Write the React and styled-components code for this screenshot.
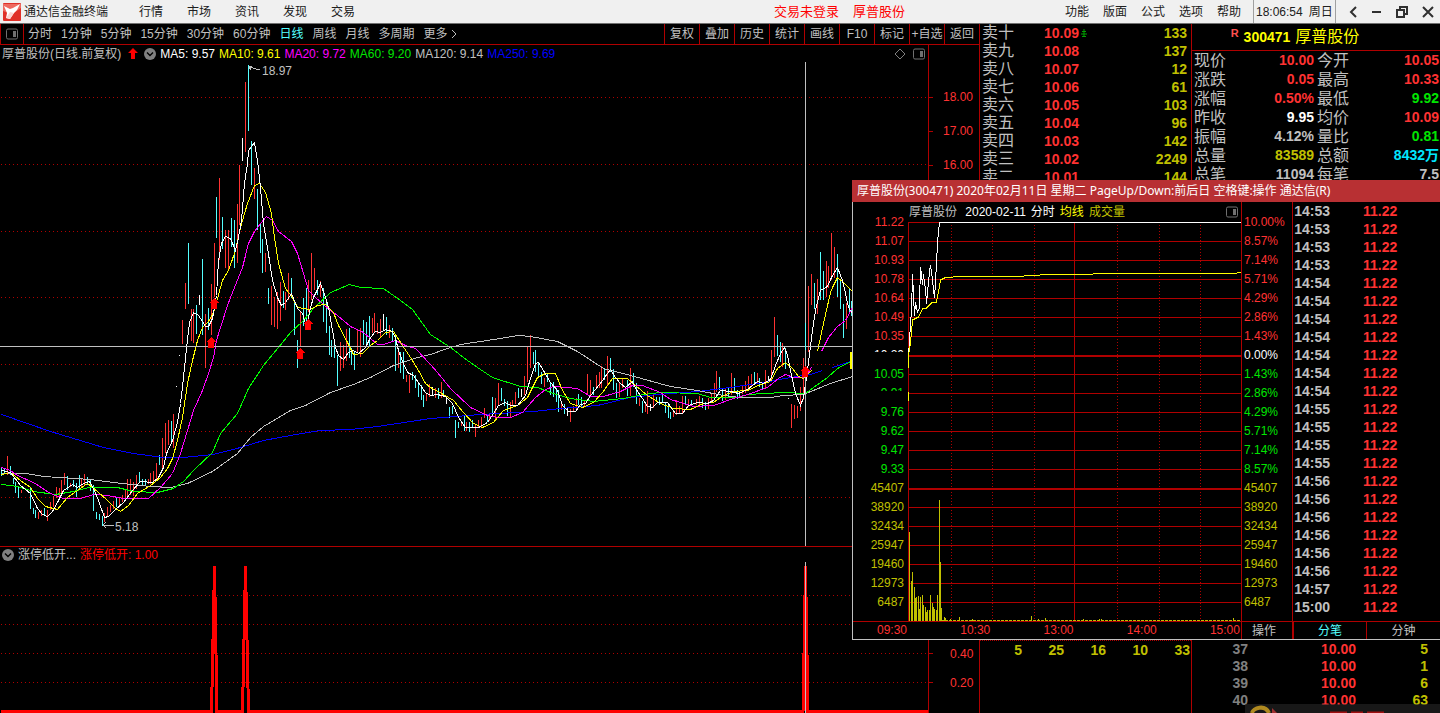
import React from 'react';
import styled, { createGlobalStyle } from 'styled-components';

const GREY = '#c0c0c0';
const RED = '#ff3232';
const YELLOW = '#c0c000';
const GREEN = '#00e600';
const CYAN = '#54ffff';
const LINE = '#b00000';

const GlobalStyle = createGlobalStyle`
  * {
    box-sizing: border-box;
  }

  body {
    margin: 0;
    background: #000;
    color: ${GREY};
    font-family: 'Liberation Sans', 'Noto Sans CJK SC', sans-serif;
    font-size: 12px;
    line-height: 16px;
  }

  button {
    margin: 0;
    padding: 0;
    border: 0;
    background: none;
    color: inherit;
    font: inherit;
    white-space: nowrap;
  }

  svg {
    display: block;
    flex: none;
  }

  table {
    border-collapse: collapse;
  }

  td, th {
    padding: 0;
    font-weight: normal;
  }
`;

const Page = styled.div`
  position: relative;
  display: flex;
  flex-direction: column;
  min-height: 100vh;
  overflow: hidden;
`;

/* top menu */

const MenuBar = styled.header`
  display: flex;
  align-items: stretch;
  height: 24px;
  padding-left: 3px;
  background: #f0f0f0;
  border-bottom: 1px solid #707070;
  color: #202020;
`;

const Brand = styled.div`
  display: flex;
  align-items: center;
  gap: 3px;
  margin-right: 31px;
`;

const Menu = styled.nav`
  display: flex;
  gap: ${props => props.$gap};
`;

const Alerts = styled.div`
  display: flex;
  align-items: center;
  gap: 14px;
  margin-left: auto;
  margin-right: 160px;
  color: #f00;
  font-size: 13px;
`;

const Clock = styled.time`
  display: flex;
  align-items: center;
  gap: 6px;
  width: 83px;
  margin-left: 12px;
  padding-left: 2px;
  border-left: 1px solid #a0a0a0;
  border-right: 1px solid #a0a0a0;
`;

const WindowButtons = styled.div`
  display: flex;
  align-items: center;
  justify-content: space-between;
  width: 104px;
  padding: 0 6px 0 12px;
`;

/* workspace */

const Workspace = styled.main`
  display: flex;
  flex: 1;
`;

const ChartColumn = styled.section`
  display: flex;
  flex: 1;
  flex-direction: column;
  min-width: 0;
`;

const Toolbar = styled.div`
  display: flex;
  height: 21px;
  border-bottom: 1px solid ${LINE};
`;

const PanelToggle = styled.button`
  display: flex;
  align-items: center;
  justify-content: center;
  width: 24px;
  border-left: 1px solid ${LINE};
  border-right: 1px solid ${LINE};
`;

const Periods = styled.div`
  display: flex;
  gap: 9px;
  padding-left: 4px;
`;

const Period = styled.button`
  display: flex;
  align-items: center;
  gap: 3px;
  color: ${props => (props.$active ? CYAN : GREY)};
`;

const Tools = styled.div`
  display: flex;
  margin-left: auto;
`;

const Tool = styled.button`
  width: 35px;
  border-left: 1px solid ${LINE};
`;

const Charts = styled.div`
  display: flex;
  flex: 1;
`;

const Panes = styled.div`
  display: flex;
  flex: 1;
  flex-direction: column;
  min-width: 0;
`;

const PaneHead = styled.div`
  display: flex;
  align-items: center;
  gap: 4px;
  height: ${props => props.$height};
  padding: 0 3px 0 2px;
  white-space: nowrap;
`;

const HeadMarks = styled.div`
  display: flex;
  align-items: center;
  gap: 6px;
  margin-left: 3px;
`;

const HeadIcons = styled.div`
  display: flex;
  align-items: center;
  gap: 7px;
  margin-left: auto;
`;

const Tint = styled.span`
  color: ${props => props.$color};
`;

const PriceChart = styled.svg`
  flex: 1 0 484px;
  width: 100%;
`;

const SignalPane = styled.div`
  height: 167px;
  border-top: 1px solid ${LINE};
`;

const SignalChart = styled.svg`
  width: 100%;
  height: 151px;
`;

const Scale = styled.div`
  display: flex;
  flex-direction: column;
  justify-content: space-between;
  width: 51px;
  border-left: 1px solid ${LINE};
  color: ${RED};
`;

const ScaleGroup = styled.div`
  padding: ${props => props.$padding};
`;

const ScaleMark = styled.div`
  display: flex;
  align-items: center;
  gap: ${props => props.$gap};
  height: ${props => props.$height};

  &::before {
    content: '';
    width: 4px;
    height: 1px;
    background: ${LINE};
  }
`;

/* order book */

const BookColumn = styled.section`
  display: flex;
  flex-direction: column;
  justify-content: space-between;
  width: 212px;
  border-left: 1px solid ${LINE};
`;

const Book = styled.table`
  width: 100%;

  th {
    width: 64px;
    padding-left: 2px;
    font-size: 16px;
    text-align: left;
  }

  tr {
    height: 18px;
    line-height: 18px;
  }
`;

const Num = styled.td`
  color: ${props => props.$color};
  font-size: 14px;
  font-weight: bold;
  text-align: ${props => props.$align || 'right'};
  padding-right: ${props => props.$pad || 0};
`;

const Arrow = styled.svg`
  display: inline-block;
  margin-left: 2px;
  vertical-align: 1px;
`;

const Queue = styled.div`
  display: grid;
  grid-template-columns: repeat(5, 42px);
  height: 73px;
  border-top: 1px dotted ${LINE};
  color: ${YELLOW};
  font-size: 14px;
  font-weight: bold;
  line-height: 18px;
  text-align: right;
`;

/* quote */

const QuoteColumn = styled.section`
  display: flex;
  flex-direction: column;
  justify-content: space-between;
  width: 249px;
  border-left: 1px solid ${LINE};
`;

const QuoteTitle = styled.h1`
  display: flex;
  align-items: center;
  justify-content: center;
  gap: 5px;
  height: 27px;
  margin: 0;
  padding-right: 42px;
  border-bottom: 1px solid ${LINE};
  color: #ff0;
  font-size: 14px;
`;

const Mark = styled.sup`
  align-self: flex-start;
  padding-top: 2px;
  color: #ff5050;
  font-size: 11px;
  line-height: 14px;
`;

const StockName = styled.span`
  font-size: 16px;
  font-weight: normal;
`;

const Quote = styled.dl`
  display: grid;
  grid-template-columns: 32px 1fr 32px 87px;
  column-gap: 3px;
  margin: 0;
  padding: 0 1px 0 2px;
  line-height: 19px;

  dt {
    font-size: 16px;
    white-space: nowrap;
  }
`;

const QuoteValue = styled.dd`
  margin: 0;
  color: ${props => props.$color};
  font-size: 14px;
  font-weight: bold;
  text-align: right;
`;

const Trades = styled.table`
  width: 236px;
  table-layout: fixed;

  th {
    width: 56px;
  }

  td:nth-child(2) {
    width: 108px;
  }

  tr {
    height: 17px;
    line-height: 17px;
  }
`;

const TradesBox = styled.div`
  height: 72px;
`;

/* intraday window */

const Popup = styled.aside`
  position: absolute;
  top: 180px;
  right: 0;
  width: 588px;
  background: #000;
  border-bottom: 1px solid ${GREY};
`;

const PopupTitle = styled.h2`
  height: 22px;
  margin: 0;
  padding-left: 5px;
  background: #b83033;
  color: #fff;
  font-family: 'Noto Sans', 'Noto Sans CJK SC', sans-serif;
  font-size: 12px;
  font-weight: normal;
  line-height: 22px;
  white-space: nowrap;
`;

const PopupBody = styled.div`
  display: grid;
  grid-template-columns: 55px 1fr 51px 148px;
  grid-template-rows: 419px 18px;
  border-left: 1px solid ${GREY};
`;

const Axis = styled.div`
  padding: ${props => (props.$right ? '11px 0 0 2px' : '11px 4px 0 0')};
  border-left: ${props => (props.$right ? `1px solid ${LINE}` : '0')};
  text-align: ${props => (props.$right ? 'left' : 'right')};
`;

const AxisLabel = styled.div`
  height: 19px;
  color: ${props => props.$color};
  line-height: 19px;
`;

/* only the top few pixels of a label are painted */
const Sliver = styled.div`
  height: ${props => props.$height};
  margin-bottom: ${props => props.$rest};
  overflow: hidden;
`;

const Legend = styled.div`
  display: flex;
  align-items: center;
  gap: 5px;
  height: 20px;
  padding: 0 3px 0 1px;
  white-space: nowrap;
`;

const IntradayChart = styled.svg`
  width: 100%;
  height: 399px;
`;

const TickPane = styled.div`
  border-left: 1px solid ${LINE};
`;

const Ticks = styled.table`
  tr {
    height: 18px;
    line-height: 18px;
  }
`;

const TimeAxis = styled.div`
  display: flex;
  grid-column: 1 / 3;
  justify-content: space-between;
  padding: 0 1px 0 24px;
  border-top: 1px solid ${LINE};
  color: ${RED};
`;

const Operate = styled.button`
  border-top: 1px solid ${LINE};
  border-left: 1px solid ${LINE};
  padding-right: 6px;
`;

const Tabs = styled.div`
  display: grid;
  grid-template-columns: 1fr 1fr;
  border-top: 1px solid ${LINE};
`;

const Tab = styled.button`
  border-left: ${props => (props.$active ? '2px' : '1px')} solid ${LINE};
  color: ${props => (props.$active ? CYAN : GREY)};
`;

const Toast = styled.div`
  position: absolute;
  right: 0;
  bottom: 0;
  width: 195px;
  height: 9px;
  overflow: hidden;
  background: rgba(40, 40, 40, 0.6);
`;

/* data: each bar is "x,high,low" */

const UP_BARS = `7,456,475 21,490,493 38,512,519 41,510,516 47,510,521 50,502,510 53,496,507
56,487,498 59,488,498 61,480,495 64,473,485 70,483,487 81,478,487 84,474,486 104,513,522
107,507,517 110,505,512 113,501,509 119,497,506 122,495,502 125,490,500 127,479,499
130,479,495 133,482,496 136,475,489 148,479,484 150,473,484 153,471,482 156,463,481
162,438,471 165,423,453 168,420,445 173,414,448 182,320,344 185,283,309 191,309,341
193,309,343 205,314,368 211,284,335 214,243,297 219,178,260 225,230,268 228,230,270
237,204,263 239,165,225 245,82,152 254,168,199 265,253,272 271,286,325 274,297,327
277,292,329 280,282,321 285,292,310 288,273,300 300,312,347 308,280,312 311,253,300
314,268,290 320,281,297 340,342,371 343,345,368 346,329,361 357,330,352 360,328,357
372,318,333 374,313,333 377,323,334 380,319,337 389,325,338 398,350,368 406,375,382
409,375,393 426,394,401 429,384,397 435,388,398 441,382,398 461,422,426 466,422,431
475,424,437 478,420,428 481,417,428 484,408,418 489,413,421 495,398,420 498,383,405
510,402,417 512,400,406 515,392,404 524,376,395 527,347,382 530,335,368 544,378,387
561,402,410 570,409,422 573,406,412 576,398,410 584,400,406 587,374,395 590,380,396
596,375,387 599,372,388 601,366,388 607,356,385 619,383,397 622,378,388 630,368,396
639,398,406 645,403,412 647,391,414 653,395,408 673,410,417 676,400,415 679,406,413
682,396,414 688,399,407 696,399,405 699,396,405 708,398,409 711,393,403 714,383,398
716,371,392 725,388,400 731,373,395 742,386,394 745,381,393 748,376,390 751,374,386
757,373,383 765,370,388 771,350,380 774,317,357 782,343,367 791,404,428 794,405,419
797,406,418 800,387,411 803,358,400 808,286,352 811,274,305 817,279,314 826,261,297
828,266,288 831,233,280 834,247,278 846,303,329`;

const DOWN_BARS = `1,468,476 4,469,474 10,466,475 13,478,484 15,482,493 18,486,498 30,488,509
33,508,514 35,510,518 44,508,516 67,476,490 73,480,487 76,483,497 79,475,488 87,477,485
90,480,491 93,485,511 96,512,519 99,514,520 102,516,526 116,498,507 139,472,482 142,479,485
145,479,486 159,455,465 171,421,442 188,243,304 196,305,334 202,259,335 208,308,330
216,197,238 222,217,249 231,218,247 234,220,268 248,65,131 251,141,185 257,189,230
260,223,253 262,239,273 268,288,304 283,291,308 291,278,298 294,300,335 297,340,368
303,298,326 306,288,327 317,280,295 323,288,322 326,300,333 329,326,355 331,340,357
334,345,358 337,355,386 349,328,358 351,348,365 354,352,370 363,320,345 366,322,345
369,316,347 386,317,335 392,328,342 395,335,371 400,352,373 403,352,379 412,372,380
415,375,388 418,383,397 421,385,400 423,395,407 438,388,399 443,390,397 449,407,418
452,406,414 455,420,438 458,422,428 464,415,431 469,422,432 472,420,428 487,414,422
492,397,413 501,388,401 504,399,406 507,401,416 518,388,398 533,352,364 535,350,372
538,362,376 541,372,384 547,374,382 550,382,395 553,382,397 556,388,402 558,390,412
564,404,414 578,394,405 581,397,408 593,387,395 604,368,380 610,358,372 613,369,390
616,383,398 627,380,396 633,373,387 636,383,404 642,401,413 656,397,402 659,397,405
662,393,402 665,402,413 668,405,418 670,412,419 685,396,405 691,400,405 702,398,408
705,402,410 719,377,390 722,388,401 728,388,397 734,378,392 737,390,399 739,391,397
754,372,384 759,378,387 762,383,390 777,335,356 780,342,362 785,348,369 814,283,309
820,252,300 823,271,300 837,254,297 840,281,309 843,304,338 849,288,312 851,301,316`;

const FLAT_BARS = `199,295,305 242,138,161 383,314,330 432,387,396 446,396,404 521,389,397
567,408,416 650,404,411 768,376,382 179,355,356 176,386,387 788,398,399`;

const AVERAGES = [
  {
    color: '#0000ff',
    lines: [
      '1,414 50,431 103,447 133,453 163,457 183,457 213,454 240,447 263,440 290,435 320,430 350,429 377,426 430,418 480,414 533,411 560,408 597,405 630,397 657,394 697,391 730,387 763,382 790,377 810,374 822,370',
      '832,367 850,361 852,360',
    ],
  },
  {
    color: GREY,
    lines: [
      '1,473 25,473 43,476 90,479 113,482 150,486 170,487 187,483 212,471 237,453 250,437 263,426 290,410 305,405 330,392 353,384 370,377 393,365 417,357 430,354 447,348 460,344 500,338 518,335 530,336 557,341 577,351 603,368 630,375 670,386 697,390 723,395 740,397 770,397 783,395 803,394 830,383 852,376',
    ],
  },
  {
    color: '#00ff00',
    lines: [
      '1,484 17,486 33,491 55,494 73,491 88,487 117,487 133,491 157,492 173,488 183,481 193,470 212,452 220,433 237,413 248,388 263,365 278,347 290,332 303,320 313,308 330,292 349,284 360,287 383,288 400,300 412,309 422,323 430,334 450,347 467,360 480,369 492,377 520,386 537,387 553,393 570,398 593,401 623,398 643,394 660,392 697,393 710,397 737,397 747,394 783,392 805,393 813,387 827,377 837,368 852,360',
    ],
  },
  {
    color: '#ff00ff',
    lines: [
      '1,467 10,470 17,475 33,482 50,493 63,498 80,498 93,494 107,495 123,498 148,498 160,487 172,473 180,453 187,430 193,410 202,390 208,373 213,357 216,340 220,327 227,305 232,292 242,267 248,243 254,231 260,223 266,216 272,220 278,231 291,241 297,253 303,273 308,290 315,297 330,310 337,315 350,326 363,332 377,344 383,344 395,340 405,345 415,348 430,364 437,372 450,388 470,407 487,415 497,417 510,417 522,412 535,397 545,389 553,386 577,388 590,396 603,396 620,391 632,385 642,385 660,392 670,399 693,406 713,405 733,398 747,394 767,387 778,378 785,374 793,377 805,377 811,367',
      '821,351 828,337 837,326 845,320 852,307',
    ],
  },
  {
    color: '#ffff00',
    lines: [
      '1,474 10,472 20,480 30,487 37,498 45,506 57,509 67,497 77,490 87,483 97,491 107,500 115,508 120,511 128,505 137,493 150,485 160,477 167,468 172,458 177,440 182,417 187,383 192,360 197,340 202,327 208,321 213,312 217,298 222,280 228,270 235,250 240,227 247,203 254,185 259,183 265,192 271,213 274,237 278,263 285,288 292,297 297,307 310,309 317,305 325,304 333,312 338,325 347,342 353,354 362,353 370,345 377,340 385,332 393,331 402,345 410,357 418,370 425,383 430,387 443,394 453,400 463,412 473,423 482,427 493,422 503,410 517,405 527,397 537,377 545,373 555,373 562,390 570,403 582,407 593,402 602,392 612,378 627,378 635,385 647,395 660,403 673,408 690,409 703,403 713,402 723,395 733,391 747,390 758,385 770,381 777,368 785,362 792,368 798,376 803,378 811,370',
      '817,351 823,323 830,292 832,287 837,277 843,282 852,291',
    ],
  },
  {
    color: '#ffffff',
    lines: [
      '1,470 10,472 20,485 30,493 37,508 42,514 47,516 52,511 58,500 63,490 72,484 77,487 83,483 89,481 93,488 98,500 104,517 108,516 115,509 123,502 132,490 140,481 152,482 158,477 163,467 166,453 172,440 177,422 180,403 182,387 184,367 186,348 189,322 193,312 198,315 202,321 205,326 208,326 212,318 216,295 218,260 221,243 225,236 230,238 235,250 237,242 241,220 244,183 247,163 248,150 254,142 257,160 260,187 263,223 267,247 272,280 277,297 281,305 285,302 291,293 297,308 302,313 306,327 310,307 313,297 320,283 325,297 328,307 332,330 335,347 338,355 343,359 348,352 353,350 358,353 365,347 370,337 375,331 380,332 385,329 392,331 395,338 398,350 403,363 407,372 413,375 420,385 425,392 430,395 437,394 445,396 452,403 458,417 465,427 478,427 487,422 493,413 498,405 505,402 510,405 517,405 525,395 530,378 535,363 538,362 543,370 550,382 557,390 562,405 568,411 575,411 580,404 585,403 590,395 595,389 602,380 610,369 615,377 620,383 625,387 632,381 635,388 642,398 647,406 652,407 657,402 667,402 675,413 682,413 688,405 697,402 707,403 713,400 720,390 730,391 738,393 747,389 757,381 763,383 770,379 775,365 780,353 784,347 787,355 790,370 795,393 800,405 803,397 807,370 809,353 812,330 815,310 818,297 820,290 827,286 831,277 837,267 842,280 845,293 848,307 852,313',
    ],
  },
];

const SIGNALS = [[214, 304], [211, 343], [308, 325], [300, 354], [805, 372]];

const VOLUMES = `909,532 911,581 912,572 914,587 915,598 916,597 918,596 919,609 920,597 922,595
923,605 925,607 926,612 927,610 929,610 930,595 932,603 933,607 934,609 936,610 937,595
939,500 940,562 941,608 944,617 945,618 950,619 959,617 972,619 1031,616 1038,619 1045,618
1083,619 1099,619 1101,619 1233,618`;

const PERIODS = ['分时', '1分钟', '5分钟', '15分钟', '30分钟', '60分钟', '日线', '周线', '月线', '多周期'];
const TOOLS = ['复权', '叠加', '历史', '统计', '画线', 'F10', '标记', '+自选', '返回'];

const MA_LABELS = [
  ['MA5: 9.57', '#fff'],
  ['MA10: 9.61', '#ff0'],
  ['MA20: 9.72', '#f0f'],
  ['MA60: 9.20', GREEN],
  ['MA120: 9.14', GREY],
  ['MA250: 9.69', '#00f'],
];

const ASKS = [
  ['卖十', '10.09', 133],
  ['卖九', '10.08', 137],
  ['卖八', '10.07', 12],
  ['卖七', '10.06', 61],
  ['卖六', '10.05', 103],
  ['卖五', '10.04', 96],
  ['卖四', '10.03', 142],
  ['卖三', '10.02', 2249],
  ['卖二', '10.01', 144],
];

const QUOTE = [
  ['现价', '10.00', RED], ['今开', '10.05', RED],
  ['涨跌', '0.05', RED], ['最高', '10.33', RED],
  ['涨幅', '0.50%', RED], ['最低', '9.92', GREEN],
  ['昨收', '9.95', '#fff'], ['均价', '10.09', RED],
  ['振幅', '4.12%', GREY], ['量比', '0.81', GREEN],
  ['总量', '83589', YELLOW], ['总额', '8432万', '#00e6ff'],
  ['总笔', '11094', GREY], ['每笔', '7.5', GREY],
];

const TRADES = [[37, '10.00', 5], [38, '10.00', 1], [39, '10.00', 6], [40, '10.00', 63]];

const PRICES = ['11.22', '11.07', '10.93', '10.78', '10.64', '10.49', '10.35', '10.20', '10.05', '9.91', '9.76', '9.62', '9.47', '9.33'];
const PERCENTS = ['10.00%', '8.57%', '7.14%', '5.71%', '4.29%', '2.86%', '1.43%', '0.00%', '1.43%', '2.86%', '4.29%', '5.71%', '7.14%', '8.57%'];
const LOTS = ['45407', '38920', '32434', '25947', '19460', '12973', '6487'];

const TICK_TIMES = [
  '14:53', '14:53', '14:53', '14:53',
  '14:54', '14:54', '14:54', '14:54', '14:54', '14:54', '14:54',
  '14:55', '14:55', '14:55', '14:55',
  '14:56', '14:56', '14:56', '14:56', '14:56', '14:56',
  '14:57', '15:00',
];

const axisColor = (i) => {
  if (i === 7) return '#fff';
  return i < 7 ? RED : GREEN;
};

const barPath = bars => bars
  .split(/\s+/)
  .map((bar) => {
    const [x, high, low] = bar.split(',');
    return `M${x}.5 ${high}V${low}`;
  })
  .join('');

const volumePath = VOLUMES
  .split(/\s+/)
  .map((bar) => {
    const [x, top] = bar.split(',');
    return `M${x}.5 ${top}V621`;
  })
  .join('');

function Logo() {
  return (
    <svg width="18" height="18" viewBox="0 0 18 18">
      <rect width="18" height="18" rx="1" fill="#e03028" />
      <path d="M0 1h18v4L9 11 0 8z" fill="#ee6a60" />
      <path d="M1 3l6 3 3-1 7-4-3 6-3 3-4 6-4-1 1-5z" fill="#fff" />
      <path d="M7 9l4 1-4 6-4-1z" fill="#fbd5d2" />
    </svg>
  );
}

function PanelIcon() {
  return (
    <svg width="12" height="12" viewBox="0 0 12 12" fill="none">
      <rect x="0.5" y="1" width="11" height="10" rx="1.5" stroke="#707070" />
      <rect x="7" y="3" width="3" height="6" fill="#707070" />
    </svg>
  );
}

function DropIcon() {
  return (
    <svg width="12" height="12" viewBox="0 0 12 12" fill="none">
      <circle cx="6" cy="6" r="6" fill="#808080" />
      <path d="M3 4.5l3 3 3-3" stroke="#000" strokeWidth="1.4" />
    </svg>
  );
}

function UpArrow() {
  return (
    <svg width="10" height="11" viewBox="0 0 10 11">
      <path d="M5 0l5 5H7v6H3V5H0z" fill="#f00" />
    </svg>
  );
}

function TopMenu() {
  return (
    <MenuBar>
      <Brand>
        <Logo />
        通达信金融终端
      </Brand>
      <Menu $gap="24px">
        {['行情', '市场', '资讯', '发现', '交易'].map(item => <button key={item}>{item}</button>)}
      </Menu>
      <Alerts>
        <button>交易未登录</button>
        <button>厚普股份</button>
      </Alerts>
      <Menu $gap="14px">
        {['功能', '版面', '公式', '选项', '帮助'].map(item => <button key={item}>{item}</button>)}
      </Menu>
      <Clock>
        <span>18:06:54</span>
        <span>周日</span>
      </Clock>
      <WindowButtons>
        <button aria-label="后退">
          <svg width="10" height="12" viewBox="0 0 10 12" fill="none" stroke="#303030" strokeWidth="2">
            <path d="M8 1L3 6l5 5" />
          </svg>
        </button>
        <button aria-label="最小化">
          <svg width="10" height="12" viewBox="0 0 10 12">
            <rect y="5" width="9" height="2" fill="#303030" />
          </svg>
        </button>
        <button aria-label="还原">
          <svg width="12" height="12" viewBox="0 0 12 12" fill="none" stroke="#303030" strokeWidth="2">
            <path d="M4 4V1h7v7H8M1 4h7v7H1z" />
          </svg>
        </button>
        <button aria-label="关闭">
          <svg width="12" height="12" viewBox="0 0 12 12" fill="none" stroke="#303030" strokeWidth="2">
            <path d="M1 1l10 10M11 1L1 11" />
          </svg>
        </button>
      </WindowButtons>
    </MenuBar>
  );
}

function DailyChart() {
  return (
    <PriceChart viewBox="0 62 928 484" preserveAspectRatio="none" fill="none" shapeRendering="crispEdges">
      {[97, 164, 231, 297, 364, 431, 497].map(y => (
        <path key={y} d={`M1 ${y}.5H928`} stroke={LINE} strokeDasharray="1 3" />
      ))}
      <path d={barPath(UP_BARS)} stroke={RED} />
      <path d={barPath(DOWN_BARS)} stroke={CYAN} />
      <path d={barPath(FLAT_BARS)} stroke="#fff" />
      {AVERAGES.map(ma => ma.lines.map(points => (
        <polyline key={points} points={points} stroke={ma.color} transform="translate(0.5 0.5)" />
      )))}
      <path d="M0 346.5H852M805.5 62V546" stroke={GREY} />
      <path d="M805.5 323V350" stroke={CYAN} />
      <path d="M851 352V369" stroke="#ff0" strokeWidth="2" />
      {SIGNALS.map(([x, y]) => (
        <path key={x} d={`M${x} ${y - 6}l5 5h-2v6h-6v-6h-2z`} fill="#f00" />
      ))}
      <path d="M249 67L260 70M249 66h3M249 67l2 3M103 525.5H114M103 525l3-3M103 525l3 3" stroke={GREY} />
      <text x="262" y="75" fill={GREY}>18.97</text>
      <text x="115" y="531" fill={GREY}>5.18</text>
    </PriceChart>
  );
}

function Signals() {
  return (
    <SignalChart viewBox="0 562 928 151" preserveAspectRatio="none" fill="none" shapeRendering="crispEdges">
      {[595, 624, 653, 682].map(y => (
        <path key={y} d={`M1 ${y}.5H928`} stroke={LINE} strokeDasharray="1 3" />
      ))}
      <path
        d="M1 711.5H211.5L214.5 566L217 711.5H242.5L245.5 566L248.5 711.5H803L805.5 566L808 711.5H928"
        stroke="#f00"
        strokeWidth="3"
      />
      <path d="M805.5 562V713" stroke={GREY} />
    </SignalChart>
  );
}

function ChartArea() {
  return (
    <ChartColumn>
      <Toolbar>
        <PanelToggle aria-label="侧栏"><PanelIcon /></PanelToggle>
        <Periods>
          {PERIODS.map(item => (
            <Period key={item} $active={item === '日线'}>{item}</Period>
          ))}
          <Period>
            更多
            <svg width="6" height="10" viewBox="0 0 6 10" fill="none" stroke={GREY}>
              <path d="M1 1l4 4-4 4" />
            </svg>
          </Period>
        </Periods>
        <Tools>
          {TOOLS.map(item => <Tool key={item}>{item}</Tool>)}
        </Tools>
      </Toolbar>
      <Charts>
        <Panes>
          <PaneHead $height="17px">
            <span>厚普股份(日线.前复权)</span>
            <HeadMarks>
              <UpArrow />
              <DropIcon />
            </HeadMarks>
            {MA_LABELS.map(([label, color]) => <Tint key={label} $color={color}>{label}</Tint>)}
            <HeadIcons>
              <svg width="12" height="12" viewBox="0 0 12 12" fill="none" stroke="#808080">
                <path d="M6 1l5 5-5 5-5-5z" />
              </svg>
              <PanelIcon />
            </HeadIcons>
          </PaneHead>
          <DailyChart />
          <SignalPane>
            <PaneHead $height="15px">
              <DropIcon />
              <span>涨停低开...</span>
              <Tint $color="#f00">涨停低开: 1.00</Tint>
            </PaneHead>
            <Signals />
          </SignalPane>
        </Panes>
        <Scale>
          <ScaleGroup $padding="35px 0 0">
            {['18.00', '17.00', '16.00'].map(mark => (
              <ScaleMark key={mark} $gap="10px" $height="34px">{mark}</ScaleMark>
            ))}
          </ScaleGroup>
          <ScaleGroup $padding="0 0 16px">
            {['0.40', '0.20'].map(mark => (
              <ScaleMark key={mark} $gap="17px" $height="29px">{mark}</ScaleMark>
            ))}
          </ScaleGroup>
        </Scale>
      </Charts>
    </ChartColumn>
  );
}

function OrderBook() {
  return (
    <BookColumn>
      <Book>
        <tbody>
          {ASKS.map(([label, price, volume], i) => (
            <tr key={label}>
              <th scope="row">{label}</th>
              <Num $color={RED} $align="left">
                {price}
                {i === 0 && (
                  <Arrow width="6" height="8" viewBox="0 0 6 8" fill="none" stroke="#00a000">
                    <path d="M3 0v7M1 2.5h4M0 5h6M1 7.5h4" />
                  </Arrow>
                )}
              </Num>
              <Num $color={YELLOW} $pad="4px">{volume}</Num>
            </tr>
          ))}
        </tbody>
      </Book>
      <Queue>
        {[5, 25, 16, 10, 33].map(n => <span key={n}>{n}</span>)}
      </Queue>
    </BookColumn>
  );
}

function QuotePanel() {
  return (
    <QuoteColumn>
      <div>
        <QuoteTitle>
          <Mark>R</Mark>
          300471
          <StockName>厚普股份</StockName>
        </QuoteTitle>
        <Quote>
          {QUOTE.map(([label, value, color]) => (
            <React.Fragment key={label}>
              <dt>{label}</dt>
              <QuoteValue $color={color}>{value}</QuoteValue>
            </React.Fragment>
          ))}
        </Quote>
      </div>
      <TradesBox>
        <Trades>
          <tbody>
            {TRADES.map(([no, price, volume]) => (
              <tr key={no}>
                <Num as="th" scope="row" $color="#808080">{no}</Num>
                <Num $color={RED}>{price}</Num>
                <Num $color={YELLOW}>{volume}</Num>
              </tr>
            ))}
          </tbody>
        </Trades>
      </TradesBox>
    </QuoteColumn>
  );
}

function PriceLabel({ index, children }) {
  if (index === 7) {
    return <Sliver $height="6px" $rest="13px"><AxisLabel $color="#fff">{children}</AxisLabel></Sliver>;
  }
  if (index === 9) {
    return <Sliver $height="7px" $rest="12px"><AxisLabel $color={GREEN}>{children}</AxisLabel></Sliver>;
  }
  return <AxisLabel $color={axisColor(index)}>{children}</AxisLabel>;
}

function Intraday() {
  const rows = Array.from({ length: 21 }, (_, i) => 222 + (i * 19));
  return (
    <IntradayChart viewBox="908 222 333 399" preserveAspectRatio="none" fill="none" shapeRendering="crispEdges">
      {rows.map((y, i) => (
        <path
          key={y}
          d={i === 7 || i === 14 ? `M908 ${y + 1}H1241` : `M908 ${y}.5H1241`}
          stroke={LINE}
          strokeWidth={i === 7 || i === 14 ? 2 : 1}
        />
      ))}
      <path d="M908.5 222V621M1074.5 222V621" stroke={LINE} />
      <path
        d="M951.5 225V621M992.5 225V621M1034.5 225V621M1117.5 225V621M1159.5 225V621M1200.5 225V621"
        stroke={LINE}
        strokeDasharray="1 2"
      />
      <path d={volumePath} stroke={YELLOW} />
      <path d="M941 620.5H1241" stroke={YELLOW} strokeDasharray="3 1" />
      <polyline
        points="908.5,355 909.5,342 910.5,322 911.5,312 912.5,274 913.5,295 914.5,316 915.5,302 917.5,312 919.5,308 920,285 920.5,267 921.5,275 922.5,285 923.5,274 924.5,283 925.5,288 926.5,304 927.5,292 928.5,283 929.5,272 930.5,265 931.5,272 932.5,280 933.5,290 934.5,298 935.5,282 936.5,263 937.5,243 938.5,232 939.5,222.5 1241,222.5"
        stroke="#fff"
      />
      <path d="M908.5 392V401" stroke="#ff0" />
      <polyline
        points="908.5,368 908.5,355 910.5,343 912.5,320 918.5,317 922.5,309 926.5,308 931.5,303 936.5,302 938.5,292 940.5,280 945.5,277.5 960,276.5 1016,276.5 1040,275 1077,274.5 1110,273.5 1233,273.5 1241,272.5"
        stroke="#ff0"
      />
    </IntradayChart>
  );
}

function IntradayWindow() {
  return (
    <Popup>
      <PopupTitle>
        厚普股份(300471) 2020年02月11日 星期二 PageUp/Down:前后日 空格键:操作 通达信(R)
      </PopupTitle>
      <PopupBody>
        <Axis>
          {PRICES.map((price, i) => <PriceLabel key={price} index={i}>{price}</PriceLabel>)}
          {LOTS.map(lot => <AxisLabel key={lot} $color={YELLOW}>{lot}</AxisLabel>)}
        </Axis>
        <div>
          <Legend>
            <span>厚普股份</span>
            <Tint $color="#fff">&nbsp;2020-02-11</Tint>
            <Tint $color="#fff">分时</Tint>
            <Tint $color="#ff0">均线</Tint>
            <Tint $color={YELLOW}>成交量</Tint>
            <HeadIcons><PanelIcon /></HeadIcons>
          </Legend>
          <Intraday />
        </div>
        <Axis $right>
          {PERCENTS.map((percent, i) => (
            <AxisLabel key={PRICES[i]} $color={axisColor(i)}>{percent}</AxisLabel>
          ))}
          {LOTS.map(lot => <AxisLabel key={lot} $color={YELLOW}>{lot}</AxisLabel>)}
        </Axis>
        <TickPane>
          <Ticks>
            <tbody>
              {TICK_TIMES.map((time, i) => (
                <tr key={i}>
                  <Num $color={GREY} $align="left" $pad="33px">&#8202;{time}</Num>
                  <Num $color={RED} $align="left">11.22</Num>
                </tr>
              ))}
            </tbody>
          </Ticks>
        </TickPane>
        <TimeAxis>
          {['09:30', '10:30', '13:00', '14:00', '15:00'].map(time => <span key={time}>{time}</span>)}
        </TimeAxis>
        <Operate>操作</Operate>
        <Tabs>
          <Tab $active>分笔</Tab>
          <Tab>分钟</Tab>
        </Tabs>
      </PopupBody>
    </Popup>
  );
}

export default function App() {
  return (
    <Page>
      <GlobalStyle />
      <TopMenu />
      <Workspace>
        <ChartArea />
        <OrderBook />
        <QuotePanel />
      </Workspace>
      <IntradayWindow />
      <Toast>
        <svg width="195" height="9" viewBox="0 0 195 9" fill="none">
          <path d="M7 9C8 4 20 0 24 9" stroke="#b08a20" strokeWidth="4" />
          <path d="M27 4l5 5h-5z" fill="#a03030" />
          <path d="M85 8.5h17M106 8.5h12M122 8.5h17" stroke="#a01010" strokeWidth="2" />
        </svg>
      </Toast>
    </Page>
  );
}
